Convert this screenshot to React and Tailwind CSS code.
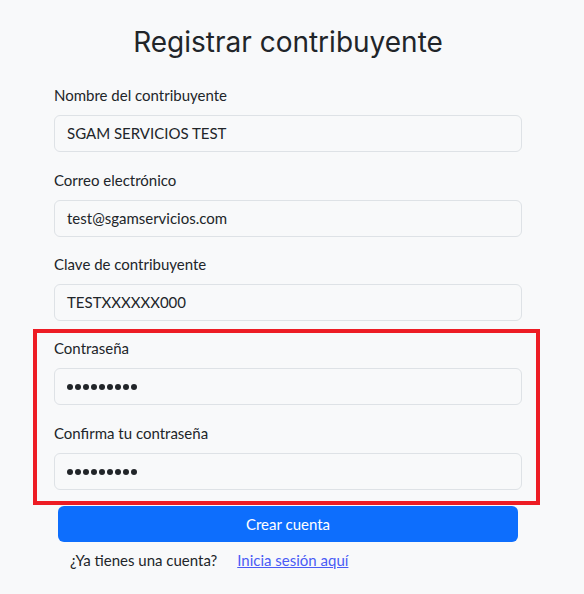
import React from "react";

function Dots() {
  return (
    <div className="flex items-center gap-[2px] mt-[1px]">
      {[0, 1, 2, 3, 4, 5, 6, 7, 8].map((i) => (
        <span key={i} className="block w-[6px] h-[6px] rounded-full bg-[#212529]" />
      ))}
    </div>
  );
}

function Field({ label, value, password }) {
  return (
    <div className="flex flex-col">
      <label className="text-[15px] leading-[20px] text-[#212529] mb-[10px]">{label}</label>
      <div className="h-[37px] rounded-[6px] border border-[#dee2e6] bg-[#f8f9fa] px-[12px] flex items-center text-[15px] text-[#212529]">
        {password ? <Dots /> : value}
      </div>
    </div>
  );
}

export default function App() {
  return (
    <div className="min-h-[594px] w-full bg-[#f8f9fa]" style={{ fontFamily: 'Lato, "Noto Sans", sans-serif' }}>
      <div className="ml-[54px] w-[468px] pt-[23px] flex flex-col">
        <h1 className="text-center text-[28px] leading-[38px] text-[#212529] mb-[24px]" style={{ fontFamily: 'Inter, sans-serif' }}>
          Registrar contribuyente
        </h1>
        <div className="flex flex-col gap-[17.5px]">
          <Field label="Nombre del contribuyente" value="SGAM SERVICIOS TEST" />
          <Field label="Correo electrónico" value="test@sgamservicios.com" />
          <Field label="Clave de contribuyente" value="TESTXXXXXX000" />
        </div>
        <div className="ml-[-21px] mr-[-18px] mt-[8px] border-[4px] border-[#ed1c24] pl-[17px] pr-[14px] pt-[5px] pb-[11px] flex flex-col gap-[18px]">
          <Field label="Contraseña" password />
          <Field label="Confirma tu contraseña" password />
        </div>
        <button className="mx-[4px] mt-[1px] h-[36px] rounded-[6px] bg-[#0d6efd] text-white text-[15px]">
          Crear cuenta
        </button>
        <div className="mt-[8px] pl-[16px] flex items-center text-[15px] text-[#212529] leading-[20px]">
          <span>¿Ya tienes una cuenta?</span>
          <a className="ml-[20px] text-[#4a5cf5] underline" href="#">Inicia sesión aquí</a>
        </div>
      </div>
    </div>
  );
}
